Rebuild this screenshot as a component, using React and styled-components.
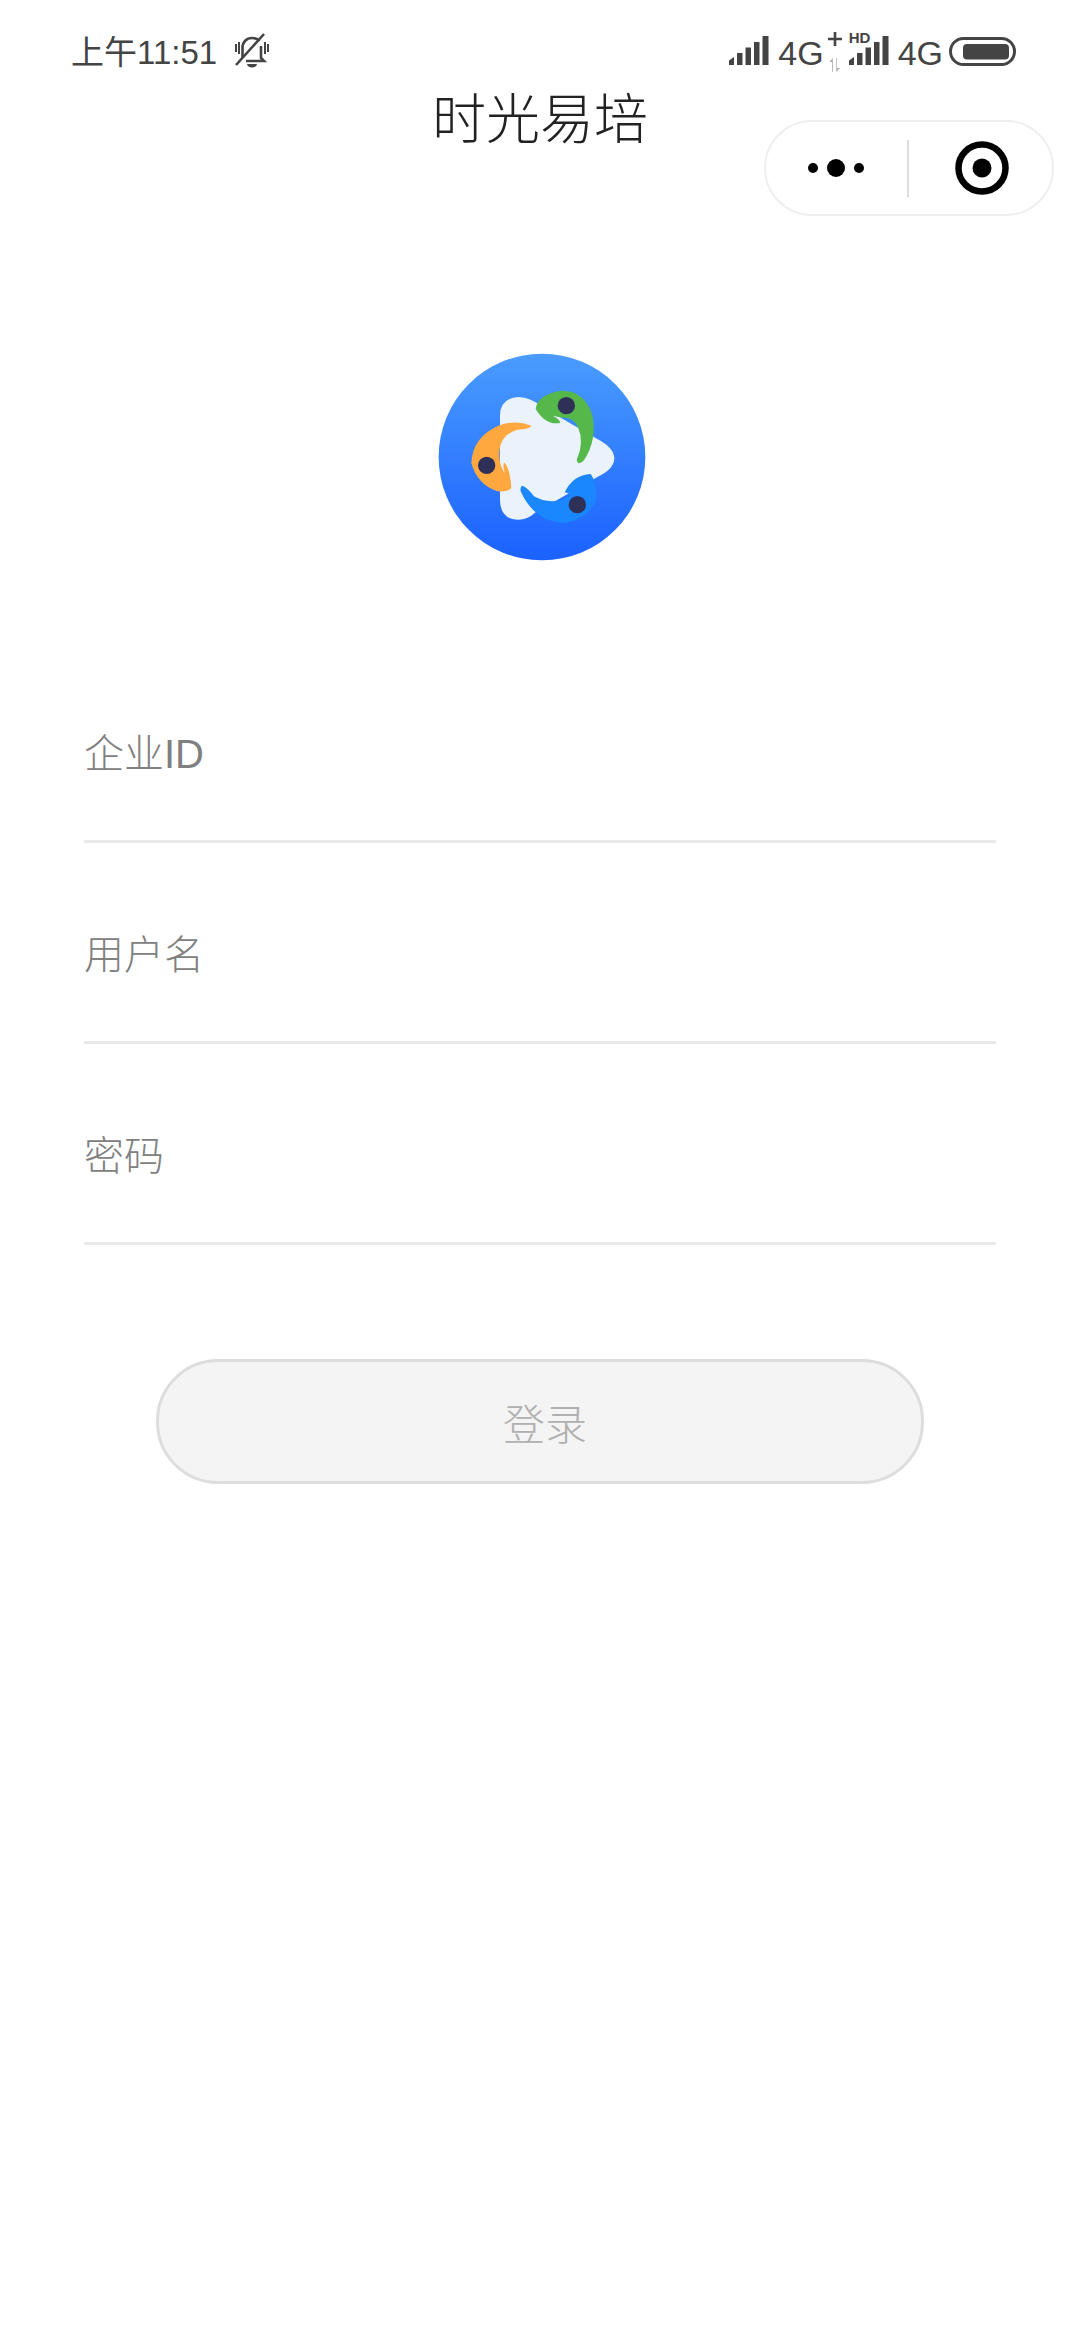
import React from "react";
import styled, { createGlobalStyle } from "styled-components";

const Global = createGlobalStyle`
  html, body { margin: 0; padding: 0; background: #fff; }
  * { box-sizing: border-box; }
`;

const FONT = `"Liberation Sans", "Noto Sans CJK SC", sans-serif`;

const Page = styled.div`
  position: relative;
  width: 1080px;
  height: 2340px;
  background: #fff;
  font-family: ${FONT};
  overflow: hidden;
`;

const StatusBar = styled.div`
  height: 70px;
  padding: 32px 64px 0 71px;
  display: flex;
  align-items: center;
  justify-content: space-between;
  color: #444;
`;

const StatusGroup = styled.div`
  display: flex;
  align-items: center;
`;

const StatusText = styled.span`
  font-size: ${(p) => p.$size}px;
  line-height: 40px;
  padding-top: 4px;
  white-space: nowrap;
`;

const BellSlot = styled.span`
  display: flex;
  margin-left: 17px;
`;

const NavBar = styled.div`
  height: 80px;
  padding-top: 20px;
  display: flex;
  align-items: center;
  justify-content: center;
`;

const Title = styled.h1`
  margin: 0;
  font-size: 54px;
  font-weight: 300;
  line-height: 80px;
  color: #222;
`;

const Capsule = styled.div`
  position: absolute;
  top: 120px;
  left: 764px;
  width: 290px;
  height: 96px;
  border: 2px solid #eee;
  border-radius: 48px;
  background: #fff;
  display: flex;
  align-items: center;
`;

const CapsuleSide = styled.div`
  flex: 1;
  display: flex;
  align-items: center;
  justify-content: center;
  padding-left: ${(p) => p.$shift || 0}px;
`;

const CapsuleDivider = styled.div`
  width: 2px;
  height: 57px;
  background: #ddd;
`;

const LogoWrap = styled.div`
  display: flex;
  justify-content: center;
  margin: 203px 0 0 3px;
`;

const Form = styled.div`
  margin: 81px 84px 0 84px;
`;

const Field = styled.div`
  height: 201px;
  border-bottom: 3px solid #e9e9e9;
  display: flex;
  align-items: flex-end;
  padding-bottom: 60px;
`;

const Placeholder = styled.span`
  font-size: 40px;
  line-height: 52px;
  font-weight: 300;
  color: #808080;
`;

const LoginButton = styled.button`
  display: block;
  margin: 114px 0 0 156px;
  width: 768px;
  height: 125px;
  padding: 0 0 0 10px;
  border: 3px solid #ddd;
  border-radius: 62px;
  background: #f4f4f4;
  color: #b0b0b0;
  font-family: ${FONT};
  font-weight: 300;
  font-size: 42px;
`;

const SignalIcon = () => (
  <svg width="40" height="30" viewBox="0 0 40 30" fill="#444">
    <path d="M0 29V24.5L5 21V29Z" />
    <rect x="8" y="17" width="5.5" height="12" />
    <rect x="16.5" y="11.5" width="5.5" height="17.5" />
    <rect x="25" y="6" width="5.5" height="23" />
    <rect x="33.5" y="0" width="6" height="29" />
  </svg>
);

const PlusMark = styled.div`
  position: relative;
  width: 23px;
  height: 40px;
`;

const HdMark = styled.span`
  position: absolute;
  top: -5px;
  left: 0;
  font-weight: 700;
  font-size: 15px;
  line-height: 14px;
  color: #444;
`;

const SignalWrap = styled.div`
  position: relative;
  display: flex;
  margin: ${(p) => p.$m};
`;

const Bell = () => (
  <svg width="36" height="36" viewBox="0 0 36 36" fill="none" stroke="#444" strokeWidth="2.6">
    <path d="M8.500 25V15c0-6 4-10 9.500-10 3 0 5.500 1 7.500 3M27 13v12l3 3H12" />
    <path d="M2 32L30 1" />
    <path d="M13 31h10a5 3.500 0 0 1-10 0Z" fill="#444" stroke="none" />
    <path d="M2 11v8M5 9v12M31 9v12M34 11v8" strokeWidth="2" />
  </svg>
);

const Arrows = () => (
  <svg width="12" height="14" viewBox="0 0 12 14" fill="#aaa" style={{ position: "absolute", left: 5, top: 27 }}>
    <path d="M3 14V4H0.500L3.800 0V14ZM8 0V10H11L7.300 14V0Z" />
  </svg>
);

const Plus = () => (
  <svg width="14" height="14" viewBox="0 0 14 14" stroke="#444" strokeWidth="2.600" style={{ position: "absolute", left: 4, top: 1 }}>
    <path d="M7 0V14M0 7H14" />
  </svg>
);

const Battery = () => (
  <svg width="67" height="29" viewBox="0 0 67 29" style={{ marginLeft: 6 }}>
    <rect x="1.500" y="1.500" width="64" height="26" rx="13" fill="none" stroke="#444" strokeWidth="3" />
    <rect x="14" y="7" width="46" height="15.500" rx="4" fill="#444" />
  </svg>
);

const Logo = () => (
  <svg width="208" height="208" viewBox="52 40 624 624">
    <defs>
      <linearGradient id="logoBg" x1="0" y1="0" x2="0" y2="1">
        <stop offset="0" stopColor="#4a9cff" />
        <stop offset="1" stopColor="#1a61ff" />
      </linearGradient>
    </defs>
    <circle cx="364" cy="352" r="310" fill="url(#logoBg)" />
    <path
      d="M238 232Q236 175 295 172Q335 175 370 205L530 298Q582 325 581 358Q578 390 530 412L345 518Q312 548 275 538Q238 528 238 480Z"
      fill="#eaf2fc"
    />
    <path
      d="M345 208Q350 165 420 153Q490 150 515 225Q530 300 490 362Q472 380 468 360Q492 310 472 262Q455 232 425 234L396 228Q420 240 418 250Q375 258 345 208Z"
      fill="#56b84a"
    />
    <path
      d="M332 258Q328 268 290 270Q240 285 236 335Q234 375 252 400Q246 380 250 368Q268 385 272 445Q262 457 230 455Q170 435 152 370Q155 290 240 255Q290 240 332 258Z"
      fill="#ffa83f"
    />
    <path
      d="M305 438Q322 445 340 470Q390 498 445 472Q452 462 432 458Q458 405 510 403Q530 430 526 480Q500 542 430 550Q340 545 300 455Q298 440 305 438Z"
      fill="#1a87ff"
    />
    <circle cx="437" cy="198" r="26" fill="#2f3058" />
    <circle cx="198" cy="377" r="26" fill="#2f3058" />
    <circle cx="470" cy="495" r="26" fill="#2f3058" />
  </svg>
);

const fields = ["企业ID", "用户名", "密码"];

export default function App() {
  return (
    <Page>
      <Global />
      <StatusBar>
        <StatusGroup>
          <StatusText $size={33}>上午11:51</StatusText>
          <BellSlot><Bell /></BellSlot>
        </StatusGroup>
        <StatusGroup>
          <SignalWrap $m="0 9px 0 0"><SignalIcon /></SignalWrap>
          <StatusText $size={34}>4G</StatusText>
          <PlusMark><Plus /><Arrows /></PlusMark>
          <SignalWrap $m="0 9px 0 2px"><SignalIcon /><HdMark>HD</HdMark></SignalWrap>
          <StatusText $size={34}>4G</StatusText>
          <Battery />
        </StatusGroup>
      </StatusBar>
      <NavBar>
        <Title>时光易培</Title>
      </NavBar>
      <Capsule>
        <CapsuleSide>
          <svg width="60" height="20" viewBox="0 0 60 20" fill="#000">
            <circle cx="7" cy="10" r="5" />
            <circle cx="30" cy="10" r="9" />
            <circle cx="53" cy="10" r="5" />
          </svg>
        </CapsuleSide>
        <CapsuleDivider />
        <CapsuleSide $shift={3}>
          <svg width="54" height="54" viewBox="0 0 54 54">
            <circle cx="27" cy="27" r="23.500" fill="none" stroke="#000" strokeWidth="6.500" />
            <circle cx="27" cy="27" r="9.500" fill="#000" />
          </svg>
        </CapsuleSide>
      </Capsule>
      <LogoWrap>
        <Logo />
      </LogoWrap>
      <Form>
        {fields.map((f) => (
          <Field key={f}>
            <Placeholder>{f}</Placeholder>
          </Field>
        ))}
      </Form>
      <LoginButton>登录</LoginButton>
    </Page>
  );
}
